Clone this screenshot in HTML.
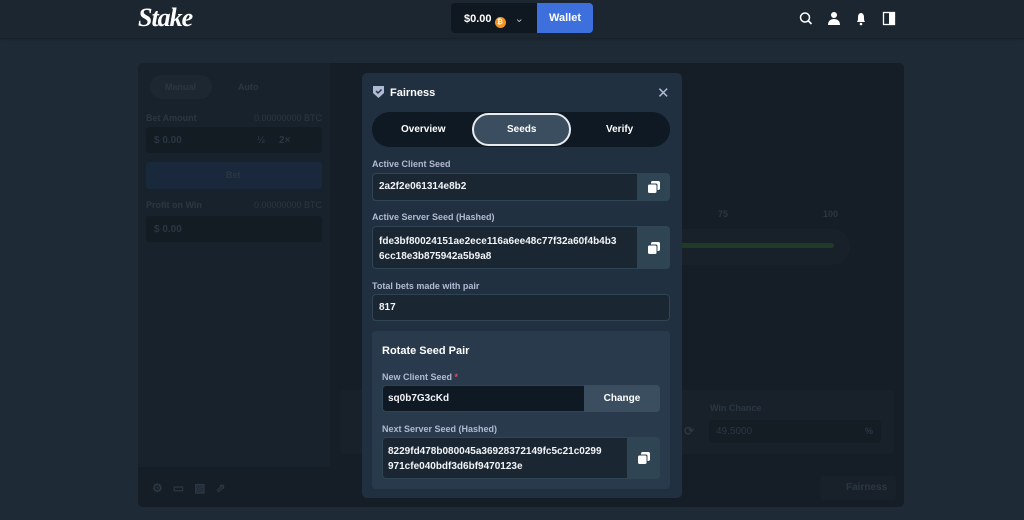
<!DOCTYPE html>
<html><head><meta charset="utf-8"><style>
*{box-sizing:border-box;margin:0;padding:0}
body{width:1024px;height:520px;overflow:hidden;background:#1e2a35;font-family:"Liberation Sans",sans-serif;position:relative;color:#fff}
.abs{position:absolute}
.hdr{left:0;top:0;width:1024px;height:38px;background:#1b2631;box-shadow:0 1px 2px rgba(0,0,0,.3)}
.logo{left:138px;top:3px;font-family:"Liberation Serif",serif;font-style:italic;font-weight:bold;font-size:26px;color:#fff;letter-spacing:-1px}
.bal{left:451px;top:3px;width:86px;height:30px;background:#0f1820;border-radius:4px 0 0 4px;font-size:11px;font-weight:bold;padding:9px 0 0 13px}
.coin{display:inline-block;width:11px;height:11px;border-radius:50%;background:#f7931a;vertical-align:-2px;margin-left:3px;font-size:7px;text-align:center;line-height:11px}
.wal{left:537px;top:3px;width:56px;height:30px;background:#3e70dd;border-radius:0 4px 4px 0;font-size:11px;font-weight:bold;text-align:center;line-height:30px}
.game{left:138px;top:63px;width:766px;height:444px;background:#151d26;border-radius:5px}
.side{left:138px;top:63px;width:192px;height:404px;background:#18222c;border-radius:5px 0 0 0}
.dim{color:#2a3743;font-size:9px;font-weight:bold}
.modal{left:362px;top:73px;width:320px;height:425px;background:#213040;border-radius:5px}
.lbl{font-size:9px;font-weight:bold;color:#b1bad3}
.inp{background:#1a2733;border:1px solid #2f4553;border-radius:4px;font-size:10px;font-weight:bold;color:#f2f4f7}
.cp{background:#2f4553;border-radius:0 4px 4px 0}
</style></head><body>
<div class="abs hdr"></div>
<div class="abs logo">Stake</div>
<div class="abs bal">$0.00<span class="coin">₿</span> <span style="font-weight:normal;margin-left:6px;color:#b1bad3">⌄</span></div>
<div class="abs wal">Wallet</div>
<svg class="abs" style="left:799px;top:11px" width="100" height="16" viewBox="0 0 100 16" fill="#fff">
<circle cx="6" cy="6.5" r="4.5" fill="none" stroke="#fff" stroke-width="1.5"/><path d="M9.5 10l3 3" stroke="#fff" stroke-width="1.6"/>
<circle cx="35" cy="4" r="3"/><path d="M29 14c0-4 2.5-6 6-6s6 2 6 6z"/>
<path d="M58 11c1-1 1-3 1-5 0-2.5 1.5-4 3-4s3 1.5 3 4c0 2 0 4 1 5z"/><circle cx="62" cy="13" r="1.3"/>
<rect x="84.5" y="1.5" width="11" height="12" fill="none" stroke="#fff" stroke-width="1.3"/><rect x="90" y="1.5" width="5.5" height="12"/>
</svg>
<div class="abs game"></div>
<div class="abs side"></div>
<div class="abs" style="left:150px;top:75px;width:62px;height:24px;border-radius:12px;background:#1c2731"></div>
<div class="abs dim" style="left:165px;top:82px">Manual</div>
<div class="abs dim" style="left:238px;top:82px">Auto</div>
<div class="abs dim" style="left:146px;top:113px">Bet Amount</div>
<div class="abs dim" style="left:254px;top:113px;font-weight:normal">0.00000000 BTC</div>
<div class="abs" style="left:146px;top:127px;width:176px;height:26px;background:#131b23;border-radius:3px"></div>
<div class="abs dim" style="left:154px;top:135px;font-size:10px">$ 0.00 &nbsp; &nbsp; &nbsp; &nbsp; &nbsp; &nbsp; &nbsp; &nbsp; &nbsp; &nbsp; &nbsp; &nbsp; &nbsp; ½ &nbsp; &nbsp; 2×</div>
<div class="abs" style="left:146px;top:162px;width:176px;height:27px;background:#19283a;border-radius:3px"></div>
<div class="abs dim" style="left:226px;top:170px">Bet</div>
<div class="abs dim" style="left:146px;top:200px">Profit on Win</div>
<div class="abs dim" style="left:254px;top:200px;font-weight:normal">0.00000000 BTC</div>
<div class="abs" style="left:146px;top:216px;width:176px;height:26px;background:#131b23;border-radius:3px"></div>
<div class="abs dim" style="left:154px;top:224px;font-size:10px">$ 0.00</div>
<div class="abs dim" style="left:718px;top:209px">75</div>
<div class="abs dim" style="left:823px;top:209px">100</div>
<div class="abs" style="left:660px;top:229px;width:190px;height:36px;border-radius:18px;background:#18212a"></div>
<div class="abs" style="left:660px;top:243px;width:174px;height:5px;border-radius:3px;background:#1f3a27"></div>
<div class="abs" style="left:340px;top:390px;width:554px;height:64px;background:#18212a;border-radius:4px"></div>
<div class="abs dim" style="left:710px;top:403px">Win Chance</div>
<div class="abs" style="left:709px;top:420px;width:172px;height:23px;background:#141c24;border-radius:3px"></div>
<div class="abs dim" style="left:716px;top:426px;font-size:10px;font-weight:normal">49.5000</div>
<div class="abs dim" style="left:865px;top:426px">%</div>
<div class="abs dim" style="left:684px;top:424px;font-size:12px">⟳</div>
<div class="abs" style="left:820px;top:476px;width:76px;height:24px;background:#18212a;border-radius:4px"></div>
<div class="abs dim" style="left:846px;top:482px;font-size:10px">Fairness</div>
<div class="abs dim" style="left:152px;top:481px;font-size:12px">⚙ &nbsp; ▭ &nbsp; ▨ &nbsp; ⇗</div>

<div class="abs modal"></div>
<svg class="abs" style="left:373px;top:86px" width="11" height="12" viewBox="0 0 11 12"><path d="M0 0h11v7l-5.5 5L0 7z" fill="#b1bad3"/><path d="M3 5l2 2 3.5-3.5" stroke="#213040" stroke-width="1.4" fill="none"/></svg>
<div class="abs" style="left:390px;top:87px;font-size:11px;font-weight:bold">Fairness</div>
<div class="abs" style="left:657px;top:84px;font-size:15px;color:#b1bad3">✕</div>
<div class="abs" style="left:372px;top:112px;width:298px;height:35px;background:#0f1923;border-radius:18px"></div>
<div class="abs" style="left:472px;top:113px;width:99px;height:33px;background:#3b4e60;border:2px solid #e8ecf0;border-radius:17px"></div>
<div class="abs" style="left:401px;top:124px;font-size:10px;font-weight:bold">Overview</div>
<div class="abs" style="left:507px;top:124px;font-size:10px;font-weight:bold">Seeds</div>
<div class="abs" style="left:606px;top:124px;font-size:10px;font-weight:bold">Verify</div>

<div class="abs lbl" style="left:372px;top:159px">Active Client Seed</div>
<div class="abs inp" style="left:372px;top:173px;width:298px;height:28px;padding:7px 0 0 6px">2a2f2e061314e8b2</div>
<div class="abs cp" style="left:637px;top:173px;width:33px;height:28px"></div>
<div class="abs lbl" style="left:372px;top:212px">Active Server Seed (Hashed)</div>
<div class="abs inp" style="left:372px;top:226px;width:298px;height:43px;padding:7px 0 0 6px;line-height:15px">fde3bf80024151ae2ece116a6ee48c77f32a60f4b4b3<br>6cc18e3b875942a5b9a8</div>
<div class="abs cp" style="left:637px;top:226px;width:33px;height:43px"></div>
<div class="abs lbl" style="left:372px;top:281px">Total bets made with pair</div>
<div class="abs inp" style="left:372px;top:294px;width:298px;height:27px;padding:7px 0 0 6px">817</div>

<div class="abs" style="left:372px;top:331px;width:298px;height:158px;background:#283a4b;border-radius:4px"></div>
<div class="abs" style="left:382px;top:345px;font-size:11px;font-weight:bold">Rotate Seed Pair</div>
<div class="abs lbl" style="left:382px;top:372px">New Client Seed <span style="color:#ed4163">*</span></div>
<div class="abs inp" style="left:382px;top:385px;width:278px;height:27px;padding:7px 0 0 5px;background:#0f1923">sq0b7G3cKd</div>
<div class="abs" style="left:584px;top:385px;width:76px;height:27px;background:#3b4e60;border-radius:0 4px 4px 0;font-size:10px;font-weight:bold;text-align:center;line-height:27px">Change</div>
<div class="abs lbl" style="left:382px;top:424px">Next Server Seed (Hashed)</div>
<div class="abs inp" style="left:382px;top:437px;width:278px;height:42px;padding:6px 0 0 5px;line-height:15px">8229fd478b080045a36928372149fc5c21c0299<br>971cfe040bdf3d6bf9470123e</div>
<div class="abs cp" style="left:627px;top:437px;width:33px;height:42px"></div>

<svg class="abs" style="left:648px;top:181px" width="12" height="12" viewBox="0 0 12 12" fill="#fff"><rect x="0" y="3.5" width="8.5" height="8.5" rx="1.5"/><path d="M3 2.5V1.5C3 .7 3.7 0 4.5 0h6C11.3 0 12 .7 12 1.5v6c0 .8-.7 1.5-1.5 1.5H9.5V4c0-.8-.7-1.5-1.5-1.5z"/></svg>
<svg class="abs" style="left:648px;top:242px" width="12" height="12" viewBox="0 0 12 12" fill="#fff"><rect x="0" y="3.5" width="8.5" height="8.5" rx="1.5"/><path d="M3 2.5V1.5C3 .7 3.7 0 4.5 0h6C11.3 0 12 .7 12 1.5v6c0 .8-.7 1.5-1.5 1.5H9.5V4c0-.8-.7-1.5-1.5-1.5z"/></svg>
<svg class="abs" style="left:638px;top:452px" width="12" height="12" viewBox="0 0 12 12" fill="#fff"><rect x="0" y="3.5" width="8.5" height="8.5" rx="1.5"/><path d="M3 2.5V1.5C3 .7 3.7 0 4.5 0h6C11.3 0 12 .7 12 1.5v6c0 .8-.7 1.5-1.5 1.5H9.5V4c0-.8-.7-1.5-1.5-1.5z"/></svg>
</body></html>
